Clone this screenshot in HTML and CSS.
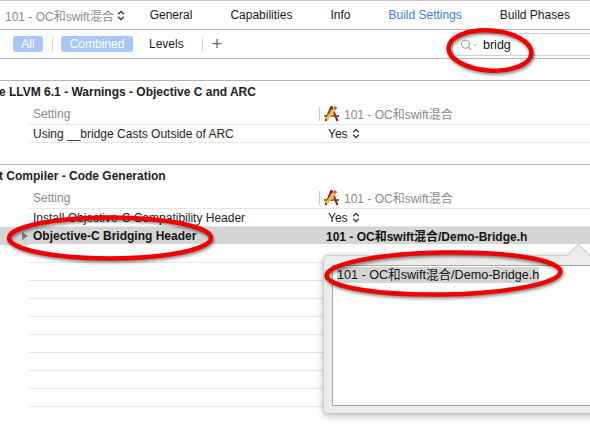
FILE: index.html
```html
<!DOCTYPE html>
<html>
<head>
<meta charset="utf-8">
<link rel="stylesheet" href="styles.css">
</head>
<body>
<div class="page">
  <div class="tabbar">
    <div class="project">101 - OC和swift混合
      <svg class="updown" width="8" height="11" viewBox="0 0 8 11"><path d="M1.2 4.2 L4 1.5 L6.8 4.2 M1.2 6.8 L4 9.5 L6.8 6.8" fill="none" stroke="#3a3a3a" stroke-width="1.4"/></svg>
    </div>
    <div class="tab">General</div>
    <div class="tab">Capabilities</div>
    <div class="tab">Info</div>
    <div class="tab active">Build Settings</div>
    <div class="tab">Build Phases</div>
  </div>

  <div class="filterbar">
    <span class="pill pill-all">All</span>
    <span class="vsep sep1"></span>
    <span class="pill pill-comb">Combined</span>
    <span class="levels">Levels</span>
    <span class="vsep sep2"></span>
    <span class="plus">+</span>
    <div class="search">
      <svg class="mag" width="17" height="12" viewBox="0 0 17 12"><circle cx="5.5" cy="5.2" r="4" fill="none" stroke="#a3a3a3" stroke-width="1.1"/><path d="M8.4 8.1 L11.3 11" stroke="#a3a3a3" stroke-width="1.3"/><path d="M13 5.2 L14.6 6.8 L16.2 5.2" fill="none" stroke="#a3a3a3" stroke-width="1"/></svg>
      <span class="query">bridg</span>
    </div>
  </div>

  <div class="gap-top"></div>

  <div class="section">
    <div class="sec-title">e LLVM 6.1 - Warnings - Objective C and ARC</div>
    <div class="row colhead">
      <div class="inner">
        <div class="name muted">Setting</div>
        <div class="value head-value">
          <span class="colsep"></span>
          <svg class="appicon" width="17" height="17" viewBox="0 0 17 17"><path d="M8.5 1.5 L2.5 16 M8.5 1.5 L14.5 16" stroke="#9b1c1c" stroke-width="2" fill="none"/><path d="M1 11 L16 11" stroke="#6b4a2a" stroke-width="1.6"/><path d="M3.5 14.5 L11.5 4" stroke="#e8c233" stroke-width="3"/><path d="M11.5 4 L13 2" stroke="#c45050" stroke-width="3"/></svg>
          <span class="muted">101 - OC和swift混合</span>
        </div>
      </div>
    </div>
    <div class="row">
      <div class="inner">
        <div class="name">Using __bridge Casts Outside of ARC</div>
        <div class="value yes">Yes
          <svg class="updown" width="8" height="11" viewBox="0 0 8 11"><path d="M1.2 4.2 L4 1.5 L6.8 4.2 M1.2 6.8 L4 9.5 L6.8 6.8" fill="none" stroke="#3a3a3a" stroke-width="1.3"/></svg>
        </div>
      </div>
    </div>
    <div class="sec-gap"></div>
  </div>

  <div class="section">
    <div class="sec-title">t Compiler - Code Generation</div>
    <div class="row colhead">
      <div class="inner">
        <div class="name muted">Setting</div>
        <div class="value head-value">
          <span class="colsep"></span>
          <svg class="appicon" width="17" height="17" viewBox="0 0 17 17"><path d="M8.5 1.5 L2.5 16 M8.5 1.5 L14.5 16" stroke="#9b1c1c" stroke-width="2" fill="none"/><path d="M1 11 L16 11" stroke="#6b4a2a" stroke-width="1.6"/><path d="M3.5 14.5 L11.5 4" stroke="#e8c233" stroke-width="3"/><path d="M11.5 4 L13 2" stroke="#c45050" stroke-width="3"/></svg>
          <span class="muted">101 - OC和swift混合</span>
        </div>
      </div>
    </div>
    <div class="row">
      <div class="inner">
        <div class="name">Install Objective-C Compatibility Header</div>
        <div class="value yes">Yes
          <svg class="updown" width="8" height="11" viewBox="0 0 8 11"><path d="M1.2 4.2 L4 1.5 L6.8 4.2 M1.2 6.8 L4 9.5 L6.8 6.8" fill="none" stroke="#3a3a3a" stroke-width="1.3"/></svg>
        </div>
      </div>
    </div>
    <div class="row sel">
      <span class="disclosure"></span>
      <div class="inner">
        <div class="name bold">Objective-C Bridging Header</div>
        <div class="value bold bold-value">101 - OC和swift混合/Demo-Bridge.h</div>
      </div>
    </div>
    <div class="row"><div class="inner"></div></div>
    <div class="row"><div class="inner"></div></div>
    <div class="row"><div class="inner"></div></div>
    <div class="row"><div class="inner"></div></div>
    <div class="row"><div class="inner"></div></div>
    <div class="row"><div class="inner"></div></div>
    <div class="row"><div class="inner"></div></div>
    <div class="row"><div class="inner"></div></div>
    <div class="row"><div class="inner"></div></div>
  </div>

  <div class="popover">
    <div class="field"><span class="selected-text">101 - OC和swift混合/Demo-Bridge.h</span></div>
  </div>

  <svg class="marks" width="590" height="424" viewBox="0 0 590 424">
    <ellipse cx="490" cy="50.5" rx="41.5" ry="20" transform="rotate(4 490 50.5)" fill="none" stroke="#f20000" stroke-width="4.5"/>
    <ellipse cx="110" cy="238" rx="101" ry="20.5" fill="none" stroke="#f20000" stroke-width="4.5"/>
    <ellipse cx="443.5" cy="273.5" rx="117" ry="21" transform="rotate(-1 443.5 273.5)" fill="none" stroke="#f20000" stroke-width="4.5"/>
  </svg>
</div>
</body>
</html>
```

FILE: styles.css
```css
* { box-sizing: border-box; }
html, body { margin: 0; padding: 0; }
body {
  font-family: "Liberation Sans", Arial, "Noto Sans CJK SC", sans-serif;
  font-size: 12px;
  color: #1e1e1e;
  background: #ffffff;
}
.page {
  position: relative;
  width: 590px;
  height: 424px;
  overflow: hidden;
  background: #ffffff;
}

/* top tab bar */
.tabbar {
  height: 30px;
  border-top: 1px solid #c4c4c4;
  border-bottom: 1px solid #b7b7b7;
  display: flex;
  align-items: center;
  padding-left: 5px;
  white-space: nowrap;
}
.project {
  color: #8c8c8c;
  display: flex;
  align-items: center;
  margin-right: 25px;
}
.project .updown { margin-left: 3px; }
.tab {
  margin-right: 38px;
  color: #1a1a1a;
}
.tab.active { color: #3d7ee0; }
.updown { display: inline-block; vertical-align: middle; }

/* filter bar */
.filterbar {
  height: 29px;
  border-bottom: 1px solid #b7b7b7;
  display: flex;
  align-items: center;
  padding-left: 13px;
  white-space: nowrap;
}
.pill {
  height: 16px;
  line-height: 16px;
  padding: 0 8px;
  border-radius: 3px;
  background: #a8c7f7;
  color: #ffffff;
}
.pill-all { width: 30px; padding: 0; text-align: center; }
.pill-comb { width: 72px; padding: 0; text-align: center; }
.vsep {
  width: 1px;
  height: 15px;
  background: #d8d8d8;
}
.sep1 { margin: 0 8px 0 9px; }
.levels { margin-left: 16px; color: #1a1a1a; }
.sep2 { margin: 0 9px 0 18px; }
.plus {
  font-size: 18px;
  font-weight: 300;
  color: #6a6a6a;
  line-height: 16px;
  margin-top: -1px;
}
.search {
  margin-left: auto;
  width: 138px;
  height: 23px;
  border: 1px solid #cfcfcf;
  border-right: none;
  border-radius: 4px 0 0 4px;
  display: flex;
  align-items: center;
  padding-left: 7px;
  margin-top: 1px;
}
.mag { margin-right: 6px; }
.query { color: #111; font-size: 12.5px; }

.gap-top { height: 21px; }

/* sections */
.section { border-top: 1px solid #b5b5b5; }
.sec-title {
  height: 22px;
  line-height: 22px;
  font-weight: bold;
  color: #222;
  margin-left: -1px;
  white-space: nowrap;
}
.row {
  position: relative;
  padding-left: 29px;
}
.row .inner {
  display: flex;
  align-items: center;
  height: 18px;
  border-bottom: 1px solid #e6e6e6;
  white-space: nowrap;
}
.row.colhead .inner { height: 22px; }
.name {
  width: 290px;
  padding-left: 4px;
}
.value { flex: 1; display: flex; align-items: center; }
.muted { color: #8a8a8a; }
.head-value .colsep {
  width: 1px;
  height: 14px;
  background: #c9c9c9;
  margin-right: 3px;
}
.appicon { margin-right: 4px; }
.yes { padding-left: 9px; color: #1a1a1a; }
.yes .updown { margin-left: 4px; }
.bold { font-weight: bold; color: #141414; }
.bold-value { padding-left: 7px; }
.sec-gap { height: 21px; }

.row.sel { background: #d5d5d5; }
.row.sel .inner { border-bottom-color: #ffffff; }
.disclosure {
  position: absolute;
  left: 22px;
  top: 5px;
  width: 0;
  height: 0;
  border-top: 4px solid transparent;
  border-bottom: 4px solid transparent;
  border-left: 6px solid #7a7a7a;
}

/* popover */
.popover {
  position: absolute;
  left: 323px;
  top: 255px;
  width: 290px;
  height: 159px;
  background: #ececec;
  border: 1px solid #cbcbcb;
  border-radius: 5px;
  box-shadow: 0 2px 7px rgba(0, 0, 0, 0.28);
  padding: 9px 0 7px 8px;
}
.popover::before {
  content: "";
  position: absolute;
  left: 246px;
  top: -9px;
  width: 16px;
  height: 16px;
  background: #ececec;
  border-top: 1px solid #cbcbcb;
  border-left: 1px solid #cbcbcb;
  transform: rotate(45deg);
}
.field {
  position: relative;
  height: 100%;
  background: #ffffff;
  border: 1px solid #a8a8a8;
  padding: 1px 0 0 4px;
}
.selected-text {
  display: inline-block;
  background: #d4d4d4;
  font-size: 12.6px;
  line-height: 16px;
  color: #111;
  white-space: nowrap;
}

/* annotation marks */
.marks {
  position: absolute;
  left: 0;
  top: 0;
  pointer-events: none;
  filter: drop-shadow(1px 2px 1.5px rgba(0, 0, 0, 0.45));
}
```
